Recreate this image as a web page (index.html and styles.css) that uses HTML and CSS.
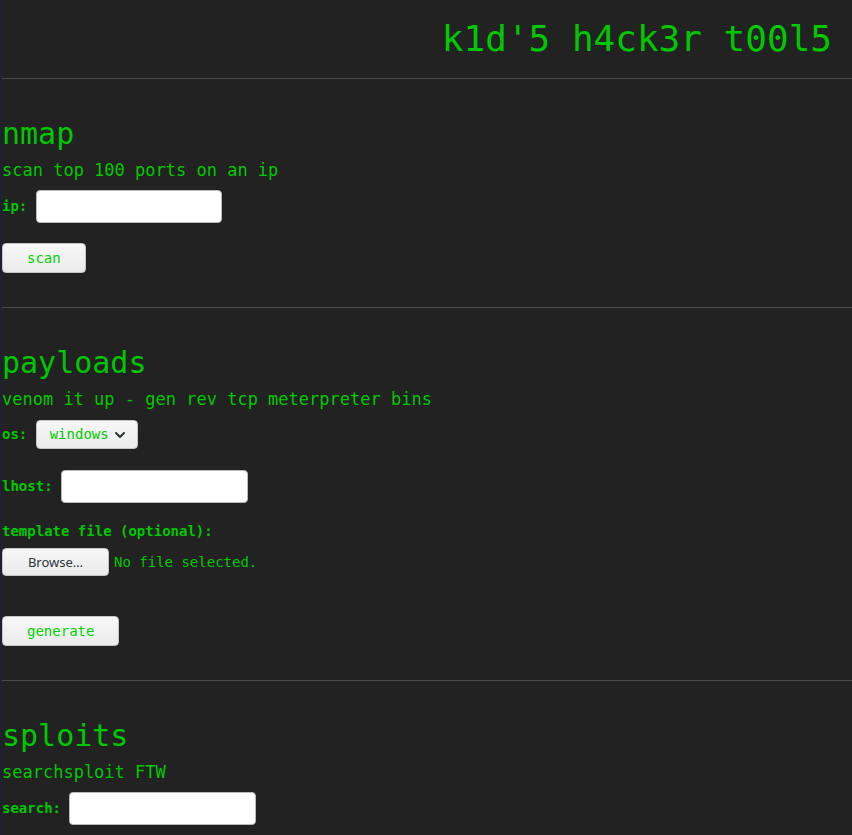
FILE: index.html
```html
<!DOCTYPE html>
<html lang="en">
<head>
<meta charset="utf-8">
<title>k1d'5 h4ck3r t00l5</title>
<link rel="stylesheet" href="styles.css">
</head>
<body>
<header class="top">
  <h1 class="title">k1d'5 h4ck3r t00l5</h1>
</header>
<hr class="rule">

<section class="tool">
  <h2 class="tool-name">nmap</h2>
  <p class="tool-desc">scan top 100 ports on an ip</p>
  <form class="tool-form" onsubmit="return false">
    <div class="field">
      <label class="field-label" for="ip">ip:</label>
      <input class="text-input text-input--ip" id="ip" type="text">
    </div>
    <div class="actions">
      <button class="btn" type="submit">scan</button>
    </div>
  </form>
</section>
<hr class="rule">

<section class="tool">
  <h2 class="tool-name">payloads</h2>
  <p class="tool-desc">venom it up - gen rev tcp meterpreter bins</p>
  <form class="tool-form" onsubmit="return false">
    <div class="field field--select">
      <label class="field-label" for="os">os:</label>
      <span class="select-wrap">
        <select class="select" id="os">
          <option>windows</option>
          <option>linux</option>
          <option>osx</option>
        </select>
        <svg class="chevron" width="12" height="8" viewBox="0 0 12 8" aria-hidden="true"><path d="M2 2 L6 6 L10 2" fill="none" stroke="#2e3436" stroke-width="2" stroke-linecap="round" stroke-linejoin="round"/></svg>
      </span>
    </div>
    <div class="field field--lhost">
      <label class="field-label" for="lhost">lhost:</label>
      <input class="text-input" id="lhost" type="text">
    </div>
    <div class="field-label block-label">template file (optional):</div>
    <div class="file-row">
      <label class="file-btn" for="tpl">Browse…</label>
      <input class="file-hidden" id="tpl" type="file">
      <span class="file-status">No file selected.</span>
    </div>
    <div class="actions actions--generate">
      <button class="btn" type="submit">generate</button>
    </div>
  </form>
</section>
<hr class="rule">

<section class="tool">
  <h2 class="tool-name">sploits</h2>
  <p class="tool-desc">searchsploit FTW</p>
  <form class="tool-form" onsubmit="return false">
    <div class="field">
      <label class="field-label" for="search">search:</label>
      <input class="text-input" id="search" type="text">
    </div>
    <div class="actions">
      <button class="btn" type="submit">search</button>
    </div>
  </form>
</section>
</body>
</html>
```

FILE: styles.css
```css
html {
  background: #222222;
}

body {
  margin: 0;
  border-left: 2px solid #1e2130;
  background: #222222;
  color: #00c800;
  font-family: "DejaVu Sans Mono", "Liberation Mono", monospace;
}

.top {
  padding: 18px 20px 18px 0;
}

.title {
  margin: 0;
  text-align: right;
  font-size: 36px;
  line-height: 42px;
  font-weight: normal;
}

.rule {
  margin: 0;
  border: 0;
  border-top: 1px solid #4a4a4a;
  height: 0;
}

.tool {
  padding: 36px 0 34px;
}

.tool-name {
  margin: 0 0 7px;
  font-size: 30px;
  line-height: 38px;
  font-weight: normal;
}

.tool-desc {
  margin: 0 0 10px;
  font-size: 17px;
  line-height: 20px;
}

.tool-form {
  display: flex;
  flex-direction: column;
  align-items: flex-start;
  margin: 0;
}

.field {
  display: flex;
  align-items: center;
  gap: 8.4px;
}

.field--select {
  margin-top: 1px;
  margin-bottom: 21px;
}

.field--lhost {
  margin-bottom: 20px;
}

.field-label {
  font-size: 14px;
  line-height: 17px;
  font-weight: bold;
}

.block-label {
  margin-bottom: 8px;
}

.text-input {
  box-sizing: border-box;
  width: 187px;
  height: 33px;
  margin: 0;
  border: 1px solid #b8b8b8;
  border-radius: 4px;
  background: #ffffff;
  font-family: inherit;
  font-size: 14px;
  color: #000;
  padding: 0 6px;
}

.text-input--ip {
  width: 186px;
}

.select-wrap {
  position: relative;
  display: inline-block;
}

.select {
  -webkit-appearance: none;
  appearance: none;
  box-sizing: border-box;
  width: 102px;
  height: 29px;
  margin: 0;
  padding: 0 24px 0 13px;
  border: 1px solid #c4c4c4;
  border-radius: 4px;
  background: linear-gradient(#f7f7f7, #ebebeb);
  color: #00c800;
  font-family: "DejaVu Sans Mono", monospace;
  font-size: 14px;
  line-height: 27px;
}

.chevron {
  position: absolute;
  right: 12px;
  top: 11px;
  pointer-events: none;
}

.file-row {
  display: flex;
  align-items: center;
  gap: 5px;
  margin-bottom: 40px;
}

.file-btn {
  box-sizing: border-box;
  display: flex;
  align-items: center;
  justify-content: center;
  width: 107px;
  height: 28px;
  border: 1px solid #c4c4c4;
  border-radius: 4px;
  background: linear-gradient(#f7f7f7, #ebebeb);
  color: #2e3436;
  font-family: "Noto Sans", "DejaVu Sans", sans-serif;
  font-size: 13px;
}

.file-hidden {
  display: none;
}

.file-status {
  font-size: 14px;
  line-height: 17px;
}

.actions {
  margin-top: 20px;
}

.actions--generate {
  margin-top: 0;
}

.btn {
  box-sizing: border-box;
  height: 30px;
  margin: 0;
  padding: 0 24px;
  border: 1px solid #c4c4c4;
  border-radius: 4px;
  background: linear-gradient(#f7f7f7, #ebebeb);
  color: #00d400;
  font-family: "DejaVu Sans Mono", monospace;
  font-size: 14px;
}
```
